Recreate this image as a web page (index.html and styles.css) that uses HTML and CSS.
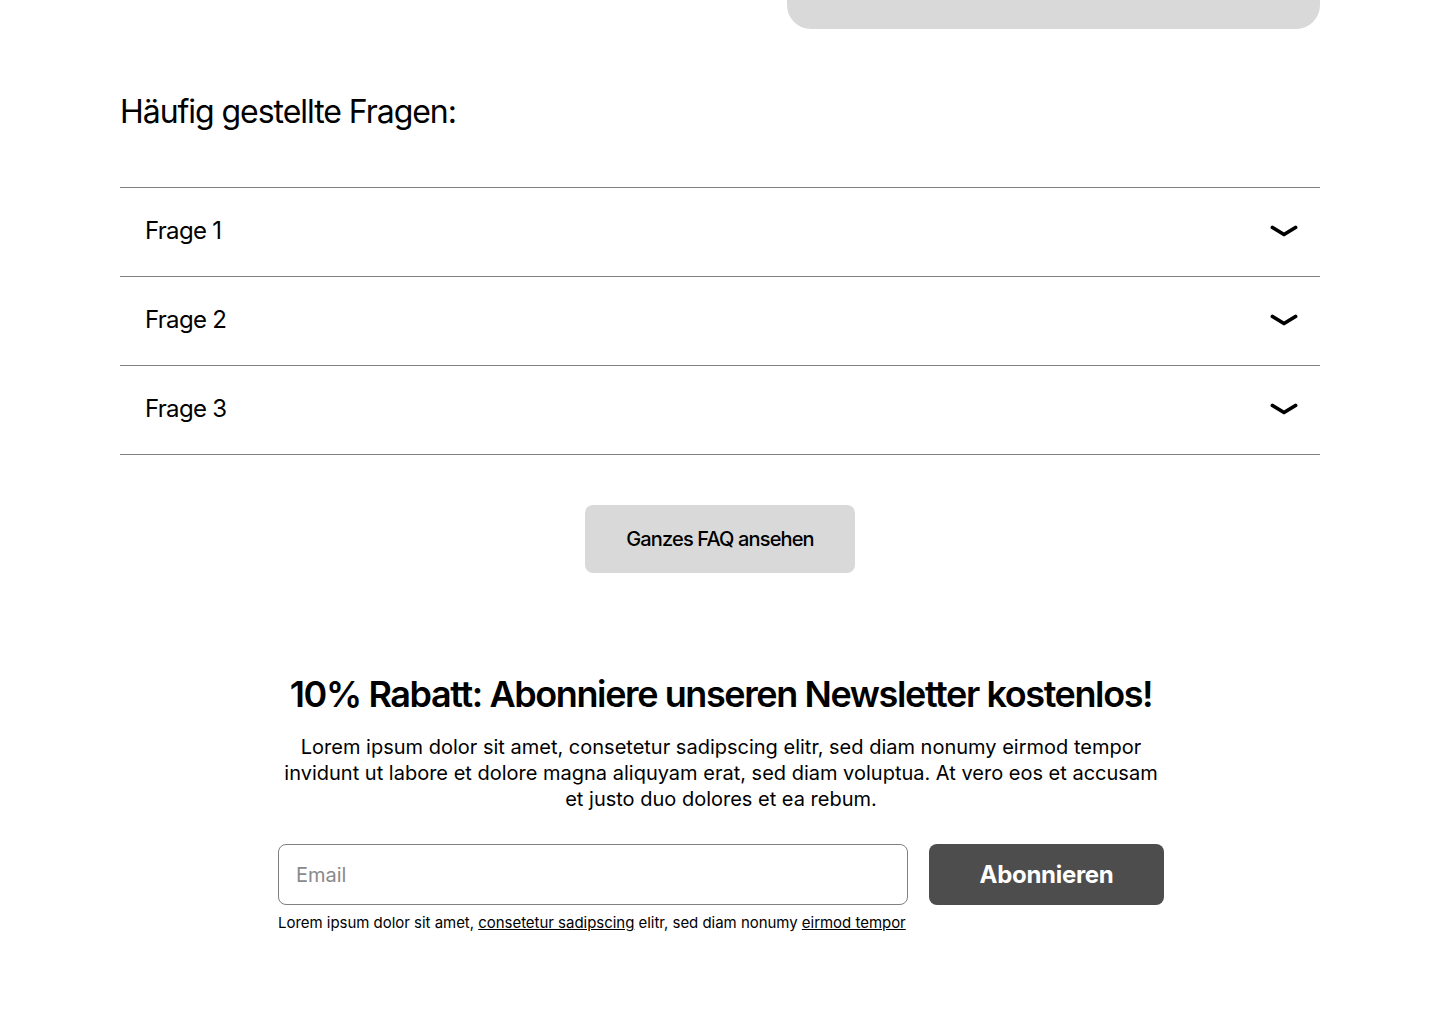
FILE: index.html
```html
<!DOCTYPE html>
<html lang="de">
<head>
<meta charset="utf-8">
<title>FAQ</title>
<link rel="stylesheet" href="styles.css">
</head>
<body>
<div class="page">
  <div class="top-row">
    <div class="top-card"></div>
  </div>

  <section class="faq">
    <h2 class="faq-title">Häufig gestellte Fragen:</h2>
    <div class="faq-list">
      <div class="faq-item">
        <span class="faq-q">Frage 1</span>
        <svg class="chev" width="28" height="14" viewBox="0 0 28 14"><path d="M2.5 2.5 L14 9.5 L25.5 2.5" fill="none" stroke="#000" stroke-width="3.8" stroke-linecap="round" stroke-linejoin="round"/></svg>
      </div>
      <div class="faq-item">
        <span class="faq-q">Frage 2</span>
        <svg class="chev" width="28" height="14" viewBox="0 0 28 14"><path d="M2.5 2.5 L14 9.5 L25.5 2.5" fill="none" stroke="#000" stroke-width="3.8" stroke-linecap="round" stroke-linejoin="round"/></svg>
      </div>
      <div class="faq-item">
        <span class="faq-q">Frage 3</span>
        <svg class="chev" width="28" height="14" viewBox="0 0 28 14"><path d="M2.5 2.5 L14 9.5 L25.5 2.5" fill="none" stroke="#000" stroke-width="3.8" stroke-linecap="round" stroke-linejoin="round"/></svg>
      </div>
    </div>
    <div class="faq-more">
      <button class="btn-light">Ganzes FAQ ansehen</button>
    </div>
  </section>

  <section class="news">
    <h2 class="news-title">10% Rabatt: Abonniere unseren Newsletter kostenlos!</h2>
    <p class="news-text">Lorem ipsum dolor sit amet, consetetur sadipscing elitr, sed diam nonumy eirmod tempor invidunt ut labore et dolore magna aliquyam erat, sed diam voluptua. At vero eos et accusam et justo duo dolores et ea rebum.</p>
    <form class="news-form">
      <div class="field-col">
        <input class="email" type="text" placeholder="Email">
        <p class="legal">Lorem ipsum dolor sit amet, <a href="#">consetetur sadipscing</a> elitr, sed diam nonumy <a href="#">eirmod tempor</a></p>
      </div>
      <button class="btn-dark" type="button">Abonnieren</button>
    </form>
  </section>
</div>
</body>
</html>
```

FILE: styles.css
```css
* { box-sizing: border-box; }
html, body { margin: 0; padding: 0; background: #fff; }
body {
  font-family: Inter, "Noto Sans", sans-serif;
  color: #000;
}
.page {
  width: 1200px;
  margin: 0 auto;
}
.top-row {
  display: flex;
  justify-content: flex-end;
}
.top-card {
  width: 533px;
  height: 29px;
  background: #d9d9d9;
  border-radius: 0 0 24px 24px;
}
.faq-title {
  margin: 0;
  padding-top: 63px;
  font-size: 32px;
  font-weight: 400;
  line-height: 40px;
  letter-spacing: -1.05px;
}
.faq-list {
  margin-top: 55px;
  border-top: 1px solid #808080;
}
.faq-item {
  height: 89px;
  border-bottom: 1px solid #808080;
  display: flex;
  align-items: center;
  justify-content: space-between;
  padding: 0 22px 0 25px;
}
.faq-q {
  font-size: 24px;
  line-height: 30px;
  letter-spacing: -0.7px;
  padding-bottom: 2px;
}
.chev { display: block; margin-top: 0; }
.faq-more {
  display: flex;
  justify-content: center;
  margin-top: 50px;
}
.btn-light {
  width: 270px;
  height: 68px;
  border: none;
  border-radius: 8px;
  background: #d9d9d9;
  font-family: Inter, sans-serif;
  font-size: 20px;
  font-weight: 500;
  letter-spacing: -0.85px;
  color: #000;
}
.news {
  width: 886px;
  margin: 0 0 0 158px;
  padding-top: 99px;
  text-align: center;
}
.news-title {
  margin: 0 -40px;
  white-space: nowrap;
  font-size: 36px;
  line-height: 44px;
  font-weight: 600;
  letter-spacing: -1.4px;
}
.news-text {
  margin: 18px 0 0;
  font-size: 20px;
  line-height: 26px;
  letter-spacing: 0;
}
.news-form {
  margin-top: 32px;
  display: flex;
  gap: 21px;
  text-align: left;
}
.field-col { width: 630px; }
.email {
  width: 630px;
  height: 61px;
  border: 1px solid #808080;
  border-radius: 8px;
  padding: 0 17px;
  font-family: Inter, sans-serif;
  font-size: 20px;
  color: #000;
  outline: none;
}
.email::placeholder { color: #8a8a8a; }
.legal {
  margin: 8px 0 0;
  font-size: 15px;
  line-height: 20px;
  letter-spacing: -0.03px;
  white-space: nowrap;
}
.legal a { color: #000; text-decoration: underline; }
.btn-dark {
  width: 235px;
  height: 61px;
  border: none;
  border-radius: 8px;
  background: #4d4d4d;
  color: #fff;
  font-family: Inter, sans-serif;
  font-size: 24px;
  font-weight: 700;
  letter-spacing: -0.3px;
}
```
